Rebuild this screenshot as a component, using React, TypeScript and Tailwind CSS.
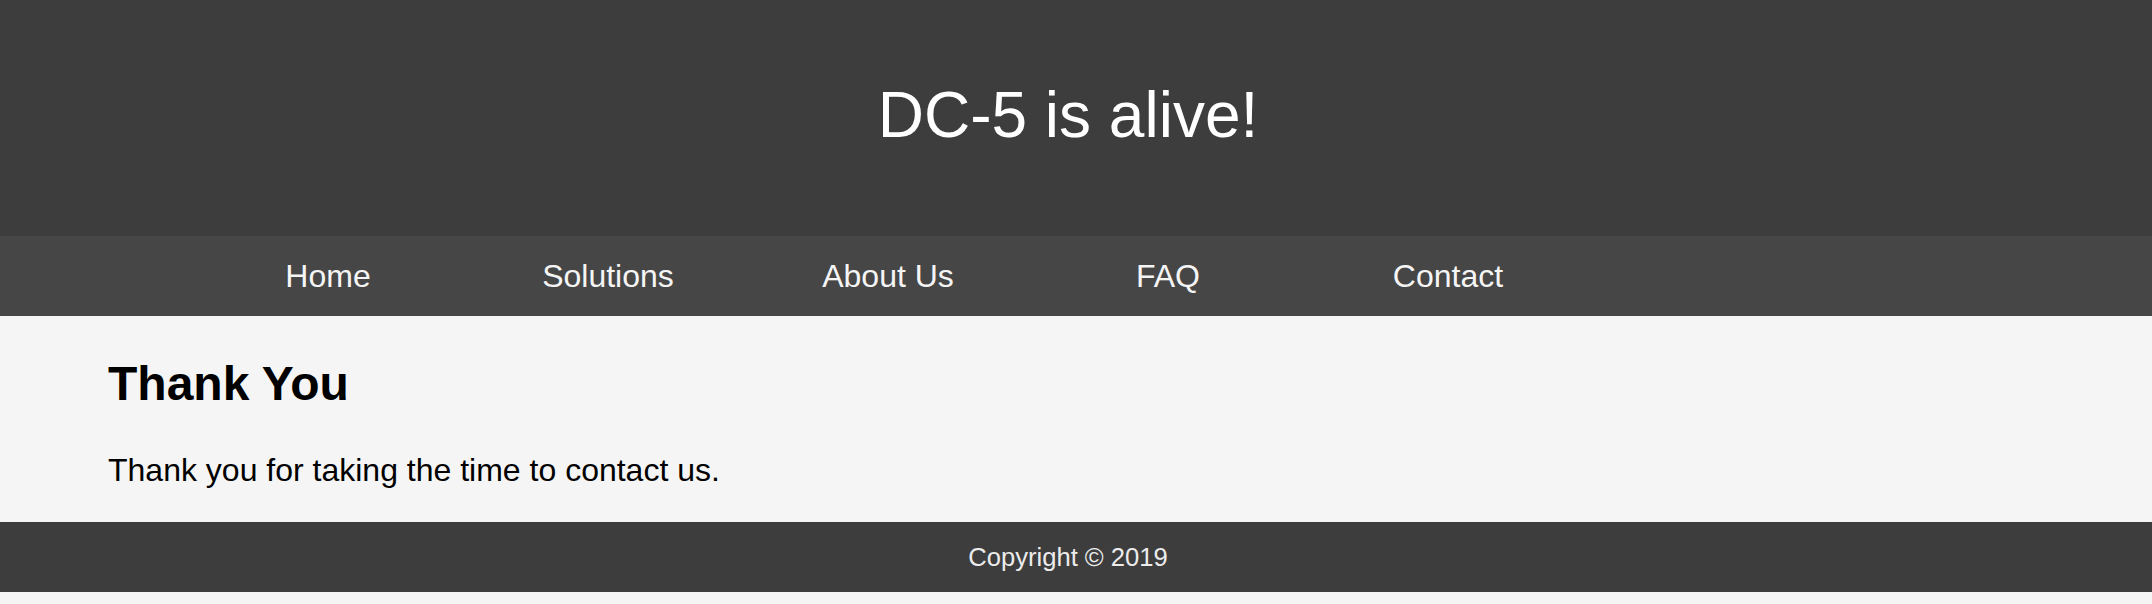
import React from 'react';

const links = ['Home', 'Solutions', 'About Us', 'FAQ', 'Contact'];

export default function App() {
  return (
    <div className="min-h-screen bg-[#f5f5f5] font-['Liberation_Sans',Arial,sans-serif]">
      <header className="h-[236px] bg-[#3d3d3d] pt-[79px] pr-[16px] text-center">
        <h1 className="text-[64px] leading-[72px] font-normal text-white">DC-5 is alive!</h1>
      </header>

      <nav className="h-[80px] bg-[#464646] pl-[188px]">
        <ul className="flex h-full items-center">
          {links.map((link) => (
            <li key={link} className="w-[280px] text-center text-[32px] leading-[36px] text-[#f5f5f5]">
              {link}
            </li>
          ))}
        </ul>
      </nav>

      <main className="pl-[108px] pt-[40px] pb-[34px] text-black">
        <h2 className="text-[48px] leading-[56px] font-bold">Thank You</h2>
        <p className="mt-[40px] text-[32px] leading-[36px]">Thank you for taking the time to contact us.</p>
      </main>

      <footer className="flex h-[70px] items-center justify-center bg-[#3d3d3d] pr-[16px]">
        <span className="text-[25.6px] leading-[30px] text-[#ececec]">Copyright © 2019</span>
      </footer>
    </div>
  );
}
